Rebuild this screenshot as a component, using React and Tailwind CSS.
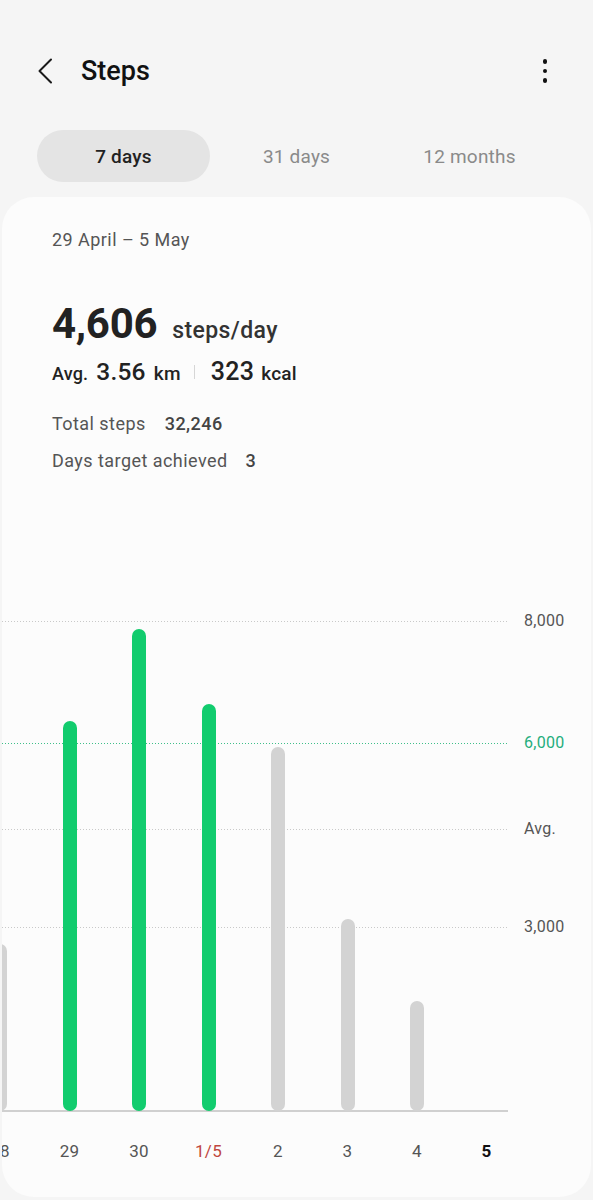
import React from 'react';

const FONT = { fontFamily: 'Roboto, "Noto Sans", "Liberation Sans", sans-serif' };

// chart geometry, in px relative to the chart box (page y - 600, page x - 2)
const BASE_Y = 509;
const days = [
    { label: '28', top: 343 },
    { label: '29', top: 120, hit: true },
    { label: '30', top: 28, hit: true },
    { label: '1/5', top: 103, hit: true, month: true },
    { label: '2', top: 146 },
    { label: '3', top: 318 },
    { label: '4', top: 400 },
    { label: '5', top: null, today: true },
];

const gridLines = [
    { y: 20, label: '8,000' },
    { y: 142, label: '6,000', goal: true },
    { y: 228, label: 'Avg.' },
    { y: 326, label: '3,000' },
];

const Chart = () => (
    <div className="relative h-[580px] w-full">
        {gridLines.map((g) => (
            <React.Fragment key={g.label}>
                <div
                    className={`absolute left-0 w-[506px] h-px ${g.goal
                        ? 'bg-[repeating-linear-gradient(90deg,#3fbf8a_0_1px,transparent_1px_3px)]'
                        : 'bg-[repeating-linear-gradient(90deg,#c9c9c9_0_1px,transparent_1px_3px)]'}`}
                    style={{ top: g.y }}
                />
                <span
                    className={`absolute left-[522px] -translate-y-1/2 text-[16px] tracking-[0.3px] leading-[20px] ${g.goal ? 'text-[#1fae7c]' : 'text-[#555]'}`}
                    style={{ top: g.y }}
                >
                    {g.label}
                </span>
            </React.Fragment>
        ))}

        {/* baseline */}
        <div className="absolute left-0 w-[506px] h-[2px] bg-[#d0d0d0]" style={{ top: BASE_Y }} />

        {days.map((d, i) => {
            const cx = -2 + 69.5 * i;
            return (
                <React.Fragment key={d.label}>
                    {d.top !== null && (
                        <div
                            className={`absolute w-[14px] rounded-full ${d.hit ? 'bg-[#12cc6e]' : 'bg-[#d3d3d3]'}`}
                            style={{ left: cx - 7, top: d.top, height: BASE_Y + 1 - d.top }}
                        />
                    )}
                    <span
                        className={`absolute w-[40px] -translate-x-1/2 -translate-y-1/2 text-center text-[17px] tracking-[0.3px] leading-[20px] ${d.month ? 'text-[#c0473f]' : d.today ? 'text-[#111] font-bold' : 'text-[#555]'}`}
                        style={{ left: cx, top: 550 }}
                    >
                        {d.label}
                    </span>
                </React.Fragment>
            );
        })}
    </div>
);

export default function App() {
    return (
        <div className="w-[593px] h-[1200px] bg-[#f5f5f5] flex flex-col overflow-hidden" style={FONT}>
            {/* Header */}
            <div className="mt-[46px] h-[50px] flex items-center pl-[37px] pr-[44px]">
                <svg width="16" height="26" viewBox="0 0 16 26" className="shrink-0">
                    <polyline points="14,1.5 2.5,13 14,24.5" fill="none" stroke="#1a1a1a" strokeWidth="2" strokeLinecap="round" strokeLinejoin="round" />
                </svg>
                <h1 className="ml-[28px] text-[27px] font-medium text-[#111] leading-none">Steps</h1>
                <div className="ml-auto flex flex-col items-center gap-[5px] w-[8px]">
                    <span className="w-[4.5px] h-[4.5px] rounded-full bg-[#111]" />
                    <span className="w-[4.5px] h-[4.5px] rounded-full bg-[#111]" />
                    <span className="w-[4.5px] h-[4.5px] rounded-full bg-[#111]" />
                </div>
            </div>

            {/* Tabs */}
            <div className="mt-[34px] mx-[37px] grid grid-cols-3 h-[52px] text-[19px] tracking-[0.2px]">
                <div className="rounded-full bg-[#e4e4e4] flex items-center justify-center pt-[2px] font-medium text-[#222]">7 days</div>
                <div className="flex items-center justify-center pt-[2px] text-[#8a8a8a]">31 days</div>
                <div className="flex items-center justify-center pt-[2px] text-[#8a8a8a]">12 months</div>
            </div>

            {/* Card */}
            <div className="mt-[15px] mx-[2px] mb-[3px] flex-1 rounded-[32px] bg-[#fcfcfc] overflow-hidden flex flex-col">
                <div className="pl-[50px] pt-[31px]">
                    <p className="text-[18px] tracking-[0.45px] leading-[24px] text-[#555]">29 April – 5 May</p>

                    <div className="mt-[46px] flex items-baseline h-[52px] leading-[52px]">
                        <span className="text-[42px] font-bold text-[#222] tracking-[-0.3px]">4,606</span>
                        <span className="ml-[15px] text-[23px] tracking-[0.4px] font-medium text-[#333]">steps/day</span>
                    </div>

                    <div className="mt-[7px] flex items-baseline h-[30px] leading-[30px] text-[#222]">
                        <span className="text-[18px] tracking-[0.2px] font-medium">Avg.</span>
                        <span className="ml-[8px] text-[24.5px] tracking-[0.2px] font-medium">3.56</span>
                        <span className="ml-[8px] text-[19px] tracking-[0.3px] font-medium">km</span>
                        <span className="ml-[13px] mr-[16px] w-px h-[14px] bg-[#d6d6d6] self-center" />
                        <span className="text-[25px] tracking-[0.3px] font-medium">323</span>
                        <span className="ml-[7px] text-[19px] tracking-[0.2px] font-medium">kcal</span>
                    </div>

                    <div className="mt-[24px] flex items-center h-[24px] text-[18px] tracking-[0.45px]">
                        <span className="text-[#555]">Total steps</span>
                        <span className="ml-[19px] font-medium text-[#444]">32,246</span>
                    </div>
                    <div className="mt-[13px] flex items-center h-[24px] text-[18px] tracking-[0.45px]">
                        <span className="text-[#555]">Days target achieved</span>
                        <span className="ml-[18px] font-medium text-[#444]">3</span>
                    </div>
                </div>

                <div className="mt-[129px]">
                    <Chart />
                </div>
            </div>
        </div>
    );
}
